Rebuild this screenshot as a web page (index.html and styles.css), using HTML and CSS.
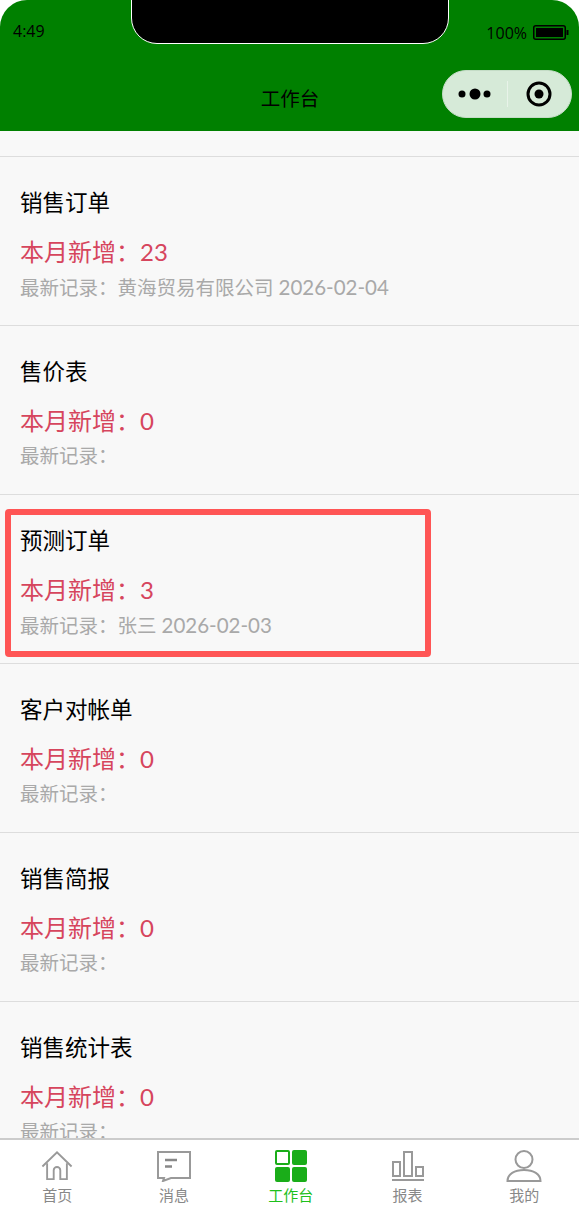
FILE: index.html
```html
<!DOCTYPE html>
<html lang="en">
<head>
  <meta charset="UTF-8">
  <meta name="viewport" content="width=device-width, initial-scale=1.0">
  <title>工作台</title>
  <link rel="stylesheet" href="styles.css">
</head>
<body>
  <div class="phone">
    <header class="nav">
      <div class="notch"></div>
      <div class="status">
        <span class="time">4:49</span>
        <span class="battery-wrap">
          <span class="percent">100%</span>
          <svg class="battery" width="37" height="15" viewBox="0 0 37 15">
            <rect x="0.75" y="0.75" width="31.5" height="13.5" rx="2" fill="none" stroke="#000" stroke-width="1.5"/>
            <rect x="3" y="3" width="27" height="9" fill="#000"/>
            <rect x="33.5" y="5" width="2" height="5" fill="#000"/>
          </svg>
        </span>
      </div>
      <div class="title-row">
        <div class="title">工作台</div>
        <div class="capsule">
          <div class="capsule-part">
            <svg width="34" height="14" viewBox="0 0 34 14">
              <circle cx="4" cy="7" r="3.5" fill="#000"/>
              <circle cx="17" cy="7" r="5.5" fill="#000"/>
              <circle cx="29" cy="7" r="3.5" fill="#000"/>
            </svg>
          </div>
          <div class="capsule-line"></div>
          <div class="capsule-part">
            <svg width="26" height="26" viewBox="0 0 26 26">
              <circle cx="13" cy="13" r="11" fill="none" stroke="#000" stroke-width="3"/>
              <circle cx="13" cy="13" r="4.5" fill="#000"/>
            </svg>
          </div>
        </div>
      </div>
    </header>

    <main class="list">
      <section class="row">
        <div class="row-name">销售订单</div>
        <div class="row-count">本月新增：23</div>
        <div class="row-last">最新记录：黄海贸易有限公司 <span class="row-date">2026-02-04</span></div>
      </section>
      <section class="row">
        <div class="row-name">售价表</div>
        <div class="row-count">本月新增：0</div>
        <div class="row-last">最新记录：</div>
      </section>
      <section class="row">
        <div class="row-name">预测订单</div>
        <div class="row-count">本月新增：3</div>
        <div class="row-last">最新记录：张三 <span class="row-date">2026-02-03</span></div>
        <div class="highlight"></div>
      </section>
      <section class="row">
        <div class="row-name">客户对帐单</div>
        <div class="row-count">本月新增：0</div>
        <div class="row-last">最新记录：</div>
      </section>
      <section class="row">
        <div class="row-name">销售简报</div>
        <div class="row-count">本月新增：0</div>
        <div class="row-last">最新记录：</div>
      </section>
      <section class="row">
        <div class="row-name">销售统计表</div>
        <div class="row-count">本月新增：0</div>
        <div class="row-last">最新记录：</div>
      </section>
    </main>

    <nav class="tabbar">
      <div class="tab">
        <svg width="32" height="32" viewBox="0 0 34 32" fill="none" stroke="#999" stroke-width="2">
          <path d="M1.5 16.5 17 1.5l15.5 15"/>
          <path d="M6.5 13v17h7V20.5a3.5 3.5 0 0 1 7 0V30h7V13"/>
        </svg>
        <span>首页</span>
      </div>
      <div class="tab">
        <svg width="34" height="32" viewBox="0 0 34 32" fill="none" stroke="#999" stroke-width="2">
          <path d="M1 2h32v26H14l-8 3 1-3H1z"/>
          <path d="M8 10h12M8 16.500h7" stroke="#888" stroke-width="2.500"/>
        </svg>
        <span>消息</span>
      </div>
      <div class="tab active">
        <svg width="32" height="32" viewBox="0 0 32 32">
          <rect x="1" y="1" width="13" height="13" rx="1" fill="none" stroke="#1aad19" stroke-width="2"/>
          <rect x="17" y="0" width="15" height="15" rx="2" fill="#1aad19"/>
          <rect x="0" y="17" width="15" height="15" rx="2" fill="#1aad19"/>
          <rect x="17" y="17" width="15" height="15" rx="2" fill="#1aad19"/>
        </svg>
        <span>工作台</span>
      </div>
      <div class="tab">
        <svg width="34" height="32" viewBox="0 0 34 32" fill="none" stroke="#999" stroke-width="2">
          <rect x="2" y="12" width="7" height="14"/>
          <rect x="13" y="2" width="8" height="24"/>
          <rect x="25" y="17" width="7" height="9"/>
          <path d="M1 30h32"/>
        </svg>
        <span>报表</span>
      </div>
      <div class="tab">
        <svg width="36" height="32" viewBox="0 0 36 32" fill="none" stroke="#999" stroke-width="2">
          <circle cx="18" cy="9.500" r="8.500"/>
          <path d="M1.500 31c0-7 7-11 16.500-11s16.500 4 16.500 11z"/>
        </svg>
        <span>我的</span>
      </div>
    </nav>
  </div>
</body>
</html>
```

FILE: styles.css
```css
* {
  margin: 0;
  padding: 0;
  box-sizing: border-box;
}

html, body {
  height: 100%;
  background: #fff;
}

body {
  font-family: "Lato", "Noto Sans CJK SC", sans-serif;
  overflow: hidden;
}

.phone {
  display: flex;
  flex-direction: column;
  height: 1230px;
  background: #fff;
}

.nav {
  position: relative;
  flex: none;
  height: 131px;
  background: #008000;
  border-radius: 27px 27px 0 0;
  padding-top: 21px;
  font-family: "Open Sans", "Noto Sans CJK SC", sans-serif;
}

.notch {
  position: absolute;
  top: -1px;
  left: 131px;
  width: 318px;
  height: 45px;
  background: #000;
  border: 1px solid #fff;
  border-radius: 0 0 26px 26px;
}

.status {
  display: flex;
  justify-content: space-between;
  align-items: center;
  height: 22px;
  padding: 0 9px 0 13px;
  color: #000;
  font-size: 16px;
}

.time {
  margin-top: -2px;
}

.battery-wrap {
  display: flex;
  align-items: center;
  gap: 6px;
  margin-top: 1px;
}

.title-row {
  position: relative;
  display: flex;
  justify-content: flex-end;
  align-items: center;
  height: 48px;
  margin-top: 27px;
  padding-right: 7px;
}

.title {
  position: absolute;
  left: 1px;
  right: 0;
  top: 15px;
  text-align: center;
  font-size: 19.500px;
  line-height: 28px;
  color: #000;
}

.capsule {
  display: flex;
  align-items: center;
  width: 130px;
  height: 48px;
  background: #d6ead8;
  border: 1px solid #c4dcc6;
  border-radius: 24px;
}

.capsule-part {
  flex: 1;
  display: flex;
  justify-content: center;
  align-items: center;
}

.capsule-line {
  width: 1px;
  height: 26px;
  background: #e8f3e9;
}

.list {
  flex: 1;
  overflow: hidden;
  background: #f8f8f8;
  padding-top: 25px;
}

.row {
  position: relative;
  height: 169px;
  border-top: 1px solid #ddd;
  padding: 30px 20px 0;
}

.row-name {
  font-size: 22.500px;
  line-height: 32px;
  color: #000;
}

.row-count {
  margin-top: 16px;
  font-size: 24px;
  line-height: 34px;
  color: #d6455d;
}

.row-last {
  margin-top: 3px;
  font-size: 19.500px;
  line-height: 30px;
  color: #a9a9a9;
}

.row-date {
  font-size: 20.500px;
}

.highlight {
  position: absolute;
  left: 5px;
  top: 14px;
  width: 426px;
  height: 148px;
  border: 6px solid #ff5555;
  border-radius: 4px;
}

.tabbar {
  flex: none;
  display: grid;
  grid-template-columns: repeat(5, 116.75px);
  height: 92px;
  margin-left: -1px;
  background: #fff;
  border-top: 2px solid #ccc;
  padding-top: 10px;
}

.tab {
  display: flex;
  flex-direction: column;
  align-items: center;
  color: #888;
  font-size: 15px;
  line-height: 20px;
  gap: 3px;
}

.tab.active {
  color: #1ec01c;
}
```
